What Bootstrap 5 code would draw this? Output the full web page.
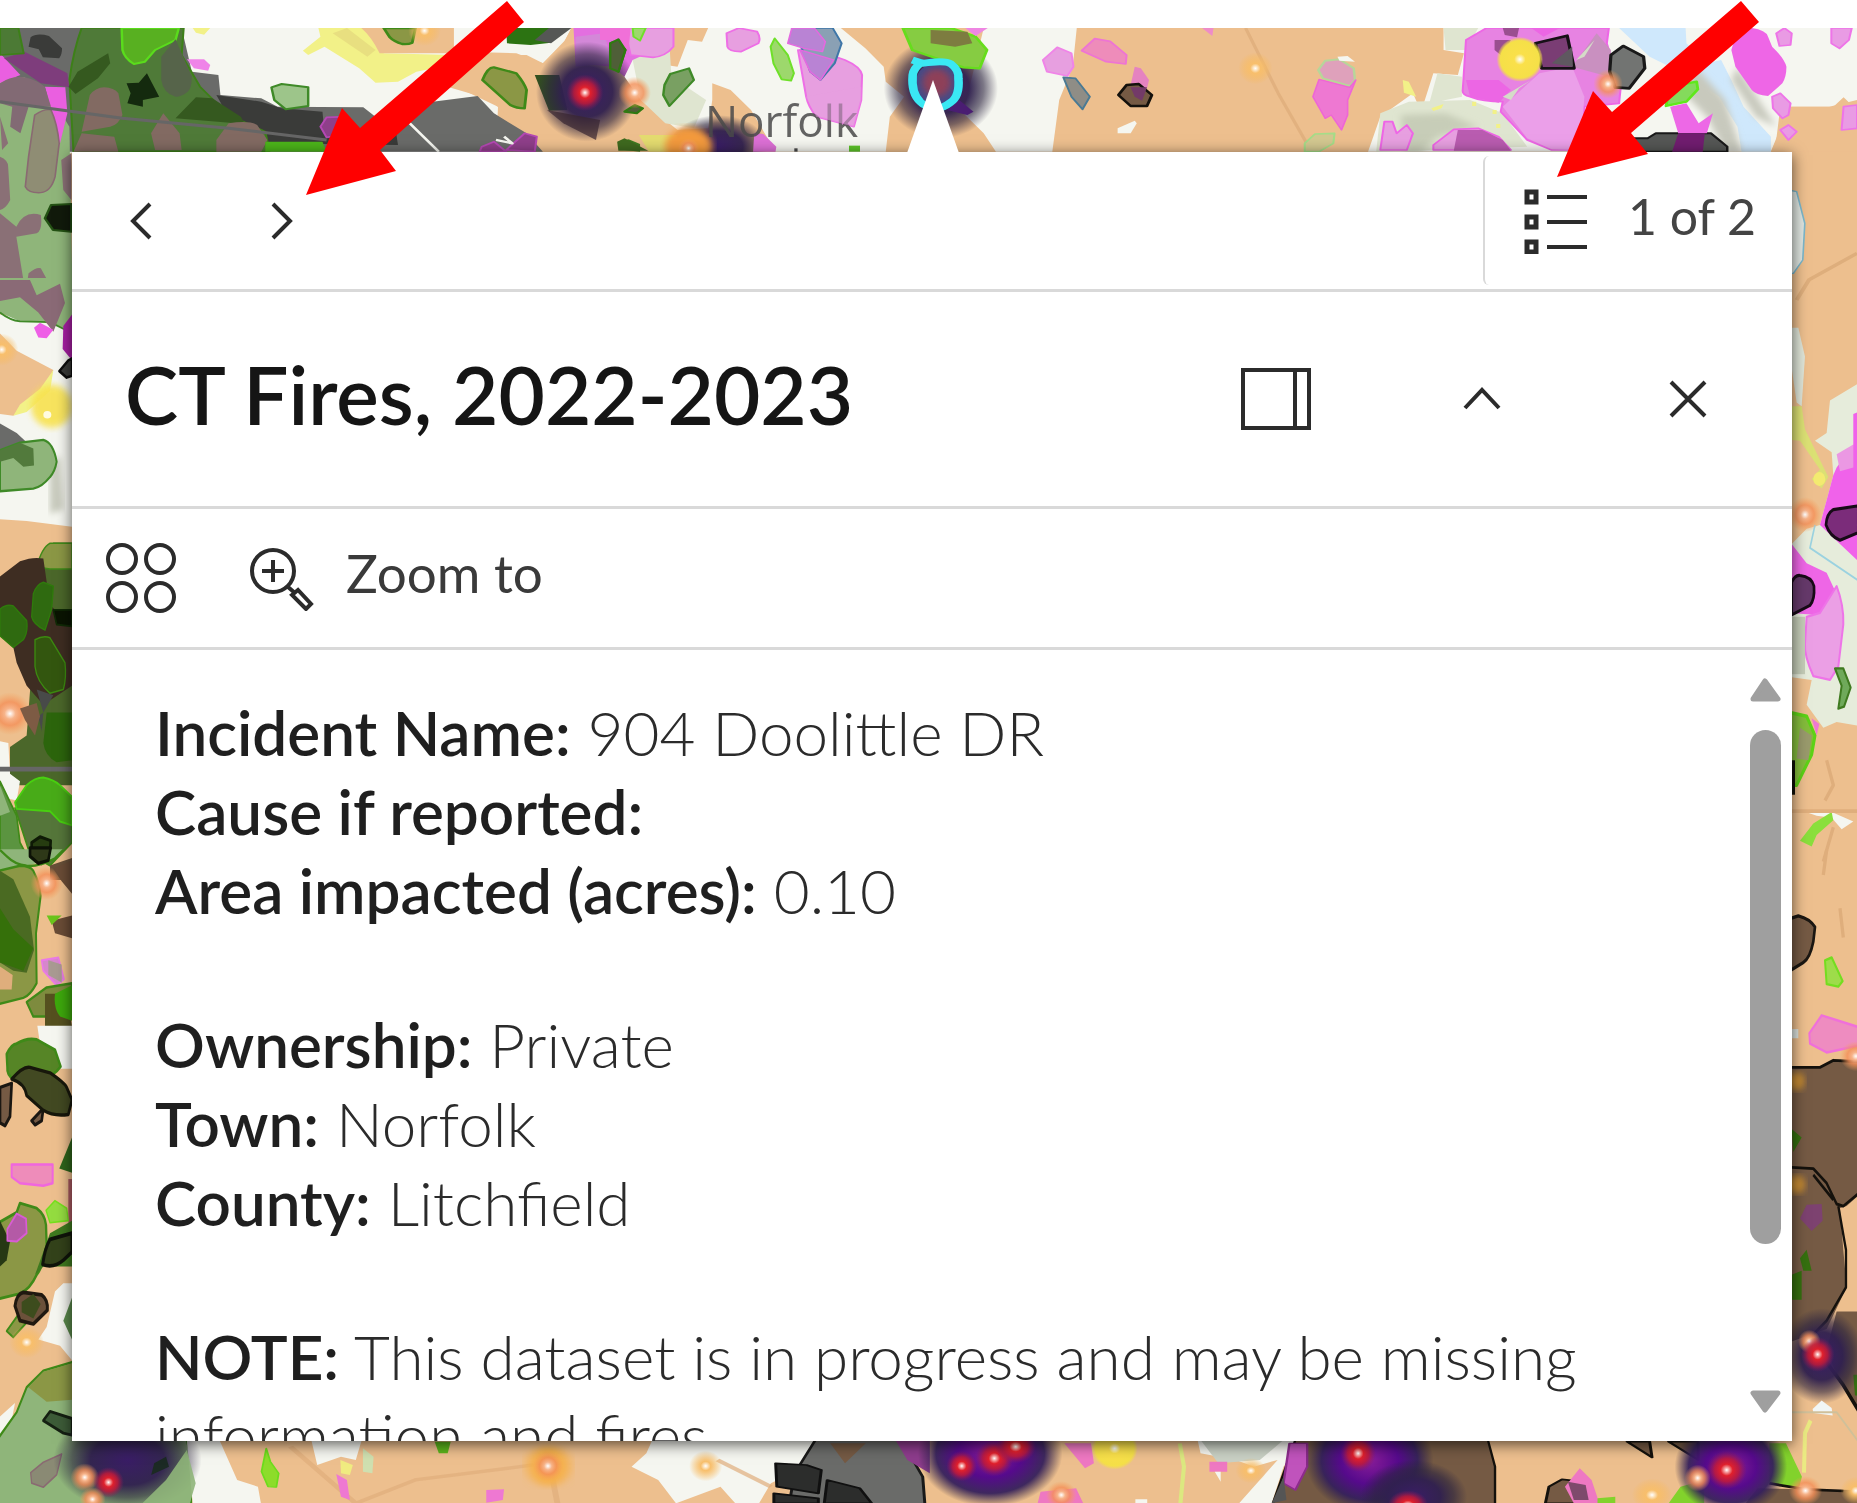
<!DOCTYPE html>
<html lang="en">
<head>
<meta charset="utf-8">
<meta name="viewport" content="width=device-width, initial-scale=1">
<title>CT Fires, 2022-2023</title>
<link href="https://cdn.jsdelivr.net/npm/bootstrap@5.3.0/dist/css/bootstrap.min.css" rel="stylesheet">
<style>
body { font-family: Lato, "Open Sans", sans-serif; color: #1f1f1f; background: #fff; }
.page { height: 100vh; min-height: 900px; padding-top: 28px; }
.map-stage { padding: 124px 65px 62px 72px; }
.map-art, .callouts { position: absolute; inset: 0; width: 100%; height: 100%; }
.map-art { stroke-linejoin: round; }
.callouts { pointer-events: none; z-index: 3; }
.popup { background: #fff; box-shadow: 0 3px 14px rgba(0,0,0,.65); z-index: 1; min-height: 0; }
.popup-pointer { position: absolute; left: 50%; top: -72px; margin-left: -25px; width: 52px; height: 73px; background: #fff; clip-path: polygon(50% 0, 100% 100%, 0 100%); }
.bar { border-bottom: 3px solid #d9d9d9; flex: none; }
.bar-nav { height: 140px; }
.bar-title { height: 217px; padding-left: 53px; }
.bar-actions { height: 141px; padding-left: 31px; gap: 68px; }
.plain { background: none; border: 0; padding: 0; color: #2b2b2b; display: flex; align-items: center; justify-content: center; border-radius: 0; }
.plain svg { fill: none; stroke: #2b2b2b; stroke-width: 3; display: block; }
.nav-step { width: 140px; height: 100%; }
.nav-step svg { stroke-width: 4; }
.nav-list { border-left: 2px solid #d9d9d9; border-radius: 6px; margin: 4px 0; padding: 0 36px 0 38px; gap: 41px; font-size: 50px; line-height: 60px; color: #444; }
.plain-label { padding-bottom: 10px; }
.title-text { font-size: 80px; line-height: 92px; font-weight: 600; color: #151515; margin: 0; padding-bottom: 10px; }
.title-btn { width: 206px; height: 100%; }
.title-tools { margin-right: 1px; }
.zoom-btn { gap: 31px; font-size: 53px; line-height: 60px; color: #3a3a3a; }
.popup-body { min-height: 0; overflow: hidden; }
.fields { padding: 43px 0 0 83px; font-size: 62px; line-height: 79px; font-weight: 300; color: #2b2b2b; overflow: hidden; }
.fields p { margin: 0 0 75px; }
.fields b { font-weight: 600; color: #1f1f1f; }
.scroller { width: 31px; margin-right: 11px; padding: 28px 0; flex: none; }
.scroller svg { fill: #9f9f9f; stroke: #9f9f9f; stroke-width: 5; stroke-linejoin: round; display: block; flex: none; }
.thumb { width: 31px; border-radius: 16px; background: #9f9f9f; margin-top: 28px; flex: 514 0 0; }
.thumb-rest { flex: 146 0 0; }
</style>
<script src="https://cdn.jsdelivr.net/npm/bootstrap@5.3.0/dist/js/bootstrap.bundle.min.js"></script>
</head>
<body>
<div class="page position-relative d-flex flex-column overflow-hidden">
<main class="map-stage position-relative flex-fill d-flex flex-column overflow-hidden">
<svg class="map-art" viewBox="0 28 1857 1475" preserveAspectRatio="xMidYMin slice" role="img" aria-label="Fire map">
<defs>
<radialGradient id="hot"><stop offset="0" stop-color="#fff"/><stop offset=".12" stop-color="#f5a0a0"/><stop offset=".3" stop-color="#e0202c"/><stop offset=".6" stop-color="#c01a3a" stop-opacity=".85"/><stop offset="1" stop-color="#8a1a60" stop-opacity="0"/></radialGradient>
<radialGradient id="warm"><stop offset="0" stop-color="#fff"/><stop offset=".25" stop-color="#f7b48a"/><stop offset=".55" stop-color="#f48f58" stop-opacity=".8"/><stop offset="1" stop-color="#f5a05c" stop-opacity="0"/></radialGradient>
<radialGradient id="amber"><stop offset="0" stop-color="#fff"/><stop offset=".3" stop-color="#f8bf6c"/><stop offset="1" stop-color="#f8b858" stop-opacity="0"/></radialGradient>
<radialGradient id="sun"><stop offset="0" stop-color="#fff"/><stop offset=".25" stop-color="#fae04a"/><stop offset=".85" stop-color="#f5e048"/><stop offset="1" stop-color="#f5e048" stop-opacity=".2"/></radialGradient>
<radialGradient id="night"><stop offset="0" stop-color="#3a1d66"/><stop offset=".5" stop-color="#30204f" stop-opacity=".96"/><stop offset=".75" stop-color="#2c2440" stop-opacity=".6"/><stop offset="1" stop-color="#2c2440" stop-opacity="0"/></radialGradient>
<radialGradient id="violet"><stop offset="0" stop-color="#8a1d98"/><stop offset=".45" stop-color="#560a8c"/><stop offset=".75" stop-color="#35205c" stop-opacity=".95"/><stop offset="1" stop-color="#2c2440" stop-opacity="0"/></radialGradient>
<filter id="soft"><feGaussianBlur stdDeviation="9"/></filter>
</defs>
<rect y="28" width="1857" height="1475" fill="#edbf8e"/>

<!-- north-west corner -->
<g transform="scale(.4082 .3333)">
<path fill="#f5f6f0" d="M440 84H1400L1380 130 1330 190 1290 165 1110 165 1100 250 1220 320 1215 460H0V84Z"/>
<path fill="#f2f188" d="M780 84H900L940 160 1110 165 1180 170 1080 200 1020 215 975 245 920 248 880 205 795 140 755 165 742 152 785 110ZM472 84H515L500 104 480 98Z"/>
<path fill="#edbf8e" d="M885 84H1112V160H930Q910 110 885 84ZM1140 155 1265 160 1330 190 1385 120 1400 84H1568V460H1325L1310 420 1210 310 1165 285 1100 262Z"/>
<path fill="#e8df80" d="M850 84 920 150 900 170 815 100Z"/>
<path fill="#6a6b69" d="M0 84H445L470 215 535 225 540 285 640 295 680 320 890 322 940 370 1000 360 1060 305 1170 288 1210 340 1290 400 1330 455H0Z"/>
<path fill="#3a3b39" d="M530 285 640 305 690 325 790 335 795 400 970 395 975 435 650 430 560 350Z"/>
<path fill="#8fb57a" d="M0 230 60 232 130 300 170 380 178 900H0Z"/>
<path fill="#4f7a38" stroke="#3d8018" stroke-width="5" d="M200 84H450L445 165 490 260 560 345 650 395 660 455H180L170 240Q180 150 200 84Z"/>
<path fill="#ea5fe0" d="M0 160 50 225 0 250ZM110 260 160 262 165 340 145 440 130 350Z"/>
<path fill="#7e3d7c" d="M60 155 165 220 170 262 100 250 10 175Z"/>
<path fill="#4c7a35" stroke="#3d8018" stroke-width="5" d="M0 84H45L58 160 0 165Z"/>
<path fill="#3a3b39" d="M75 112Q90 98 120 108L152 145Q152 165 145 175L105 172 95 148 70 140Z"/>
<path fill="#58b021" stroke="#5adc1c" stroke-width="6" d="M298 84H438L430 120 380 150 355 185 328 192Q305 175 300 150Z"/>
<path fill="#56644a" d="M395 170 430 118 470 230Q470 270 455 280 440 292 430 290 400 280 395 240Z"/>
<path fill="#35591f" d="M190 215 265 160 270 190 240 235 185 282 168 260ZM430 355 480 292 520 295 590 350 600 372Z"/>
<path fill="#142a0e" d="M310 250 340 248 360 220 372 248 390 290 350 300 350 320 312 310 320 280Z"/>
<path fill="#826a62" d="M220 285Q235 262 255 262 280 264 290 280L300 345Q290 375 270 380L200 395ZM370 400 400 340 440 400 445 450H380ZM200 400 280 410 290 455H180ZM530 420 560 370Q610 360 630 375L655 420 640 455H530Z"/>
<path fill="#826a74" d="M0 250Q30 225 60 232 90 240 110 260L125 320 70 320 50 400 25 380 30 320 0 310Z"/>
<path fill="#8f8d74" stroke="#8a6a72" stroke-width="4" d="M85 345Q110 325 125 330 140 370 145 430L135 530Q125 575 100 578 70 580 62 560L70 470Z"/>
<path fill="#8a7076" d="M0 470Q20 480 20 500L25 600Q15 625 0 630ZM0 640 40 680Q60 630 100 645 105 690 90 700L40 710 60 860 35 900H0ZM70 820Q90 800 100 805L120 850 145 850 150 900H60ZM150 480 175 460V600L155 570ZM0 350 20 430 5 450Z"/>
<path fill="#111a0b" stroke="#245214" stroke-width="6" d="M110 655 125 615 175 612V695L130 690Z"/>
<path fill="#4cb51a" d="M650 425 790 425 800 455H650Z"/>
<path fill="none" stroke="#666" stroke-width="9" d="M0 305 300 355 560 385 800 420"/>
<path fill="#ef84e8" d="M458 178 500 178 515 195 510 212 475 205Z"/>
<path fill="#9dc58a" stroke="#3f8a28" stroke-width="6" d="M665 262 690 252 755 262V318L700 328 672 300Z"/>
<path fill="#8f3f8a" stroke="#b548b4" stroke-width="5" d="M785 380 800 352 850 350 860 400 800 412ZM1180 440 1210 425 1240 455H1175ZM1240 450 1285 400 1315 410 1310 455Z"/>
<path fill="none" stroke="#f5f6f0" stroke-width="7" d="M1000 365 1075 455M1235 410 1255 430 1215 420"/>
<path fill="#8b9745" stroke="#3f8a18" stroke-width="7" d="M940 84H1018L1010 128Q1000 134 985 132 965 125 955 112ZM1182 240Q1195 200 1210 202L1265 220Q1285 250 1290 270L1285 325Q1265 325 1250 315Z"/>
<path fill="#2c7312" d="M1240 84H1350V128L1300 135 1242 130Z"/><path fill="#555755" d="M1345 84H1400L1350 130 1310 120Z"/>
<path fill="#e36fe0" d="M1405 84H1568V180L1540 240 1500 200 1410 190Z"/><path fill="#d388d8" d="M1410 110 1480 100 1500 190 1410 200Z"/>
<path fill="#33511f" d="M1310 225 1370 225 1390 330 1345 332Z"/>
<ellipse cx="1438" cy="275" rx="125" ry="150" fill="url(#night)"/><path fill="#372530" d="M1340 330 1470 360 1460 420 1380 370Z" opacity=".7"/>
<path fill="#475530" stroke="#2f7a12" stroke-width="6" d="M1495 130 1515 118 1532 150 1515 215 1495 200Z"/>
<ellipse cx="1433" cy="278" rx="45" ry="55" fill="url(#hot)"/>
<ellipse cx="1040" cy="92" rx="40" ry="46" fill="url(#amber)"/>
<path fill="#3f7a20" d="M1515 425 1540 418 1568 432V455L1530 450Z"/>
</g>

<!-- north centre -->
<g transform="translate(600 0) scale(.4082 .3333)">
<path fill="#f5f6f0" d="M265 84H590L650 145 695 200 700 245 745 290 710 350 700 455H430L370 330 320 270 275 250V300L265 385 190 390 100 300 60 230 80 180 190 200 215 120 250 125Z"/>
<path fill="#dfe5d0" d="M80 180 170 130 175 230 260 300 230 385 160 370 100 300Z"/>
<path fill="#f5f6f0" d="M940 84H1168L1158 200 1125 300 1108 455H970L940 400 890 340Z"/>
<path fill="#e79fe0" stroke="#ee6fe6" stroke-width="5" d="M60 84H180V140Q160 170 130 172L75 165ZM310 100 340 84 385 95Q395 115 388 130L345 155Q315 155 312 140ZM485 150 530 150 600 180Q638 200 642 225L640 300 622 380 530 350Q510 320 505 290Z"/>
<path fill="#f070d8" d="M0 84H75L70 150 30 120 0 120Z"/>
<path fill="#9dd86c" stroke="#6fe02a" stroke-width="5" d="M80 84H112L98 122 82 110ZM428 115 460 165 475 220 468 242 445 238 425 190 418 140Z"/>
<path fill="#8aa0b4" stroke="#3e76a8" stroke-width="5" d="M470 84H570L592 130 575 190 540 240 515 215 500 160Z"/>
<path fill="#b983d4" stroke="#e469e0" stroke-width="4" d="M470 84H525L552 125 545 155 500 145 460 130ZM490 150 572 180 540 240 515 215Z"/>
<path fill="#79a062" stroke="#3f8a28" stroke-width="6" d="M158 255 172 222 218 205 230 240 170 318 155 285Z"/>
<ellipse cx="290" cy="440" rx="120" ry="95" fill="url(#night)"/>
<path fill="#4f5f38" stroke="#2f7a12" stroke-width="6" d="M25 130 45 118 62 150 45 215 25 205ZM60 335 85 315 105 325 90 340Z"/>
<ellipse cx="85" cy="278" rx="40" ry="48" fill="url(#warm)"/>
<path fill="#e4dc70" d="M95 405H190V455H120Z"/><path fill="#3f6a1f" d="M42 425 60 415 118 452H45Z"/>
<ellipse cx="217" cy="440" rx="58" ry="58" fill="#f39a3c" filter="url(#soft)"/><ellipse cx="217" cy="445" rx="26" ry="30" fill="url(#warm)"/>
<path fill="#dd70d6" d="M378 400 400 402 432 440 430 455H375Z"/><path fill="#5dc52a" d="M610 437H637V455H610Z"/><path fill="#4a4a4a" d="M476 445H484V455H476Z"/>
<g fill="#4a4a4a" opacity=".85" transform="scale(2.45 3)"><text x="105" y="137" font-family="Open Sans, Noto Sans, sans-serif" font-size="44">Norfolk</text></g>
<path fill="#e79fe0" opacity=".55" d="M505 290 640 260 640 300 622 380 530 350Z"/>
<ellipse cx="835" cy="265" rx="140" ry="150" fill="url(#night)"/>
<path fill="#86cc42" stroke="#66dd1c" stroke-width="7" d="M742 84H860L920 110 948 150 930 205 890 202 800 165 765 150Z"/><path fill="#7d7c40" d="M810 90 900 95 912 130 870 140 810 130Z"/>
<path fill="#ee86e2" d="M895 84H950L920 108Z"/>
<ellipse cx="825" cy="250" rx="52" ry="62" fill="#454a86"/><ellipse cx="825" cy="248" rx="35" ry="42" fill="#8e4058" filter="url(#soft)"/>
<path fill="#4a1d72" d="M880 300 915 335 900 345 850 330Z"/>
<path fill="none" stroke="#3ae8f4" stroke-width="21" d="M765 180 790 190Q845 180 860 192 880 210 878 235 882 290 858 308 840 325 825 325 795 320 785 306 762 280 766 225 768 205 785 190"/>
<path fill="#e79fe0" stroke="#f084e8" stroke-width="5" d="M1085 180 1120 142 1155 160 1160 200 1145 228 1095 215Z"/>
<path fill="#ee8cba" stroke="#ee74d4" stroke-width="5" d="M1180 152 1212 116 1250 124 1290 165 1288 192 1240 185Z"/>
<path fill="#8f8d86" stroke="#4a7a94" stroke-width="5" d="M1135 232 1165 235 1200 290 1182 328 1155 290Z"/>
<path fill="#e583c0" d="M1310 200 1325 205 1345 240 1340 265 1300 255Z"/>
<path fill="#755a44" stroke="#14110c" stroke-width="7" d="M1270 285 1290 255 1320 252 1352 285 1340 318 1300 318Z"/><path fill="#733a68" d="M1300 262 1340 262 1328 302 1310 290Z"/>
<path fill="#f5f6f0" d="M1268 385 1310 362 1315 370 1300 400H1268Z"/><path fill="#ee8cc8" d="M1475 84H1503L1500 108Z"/>
</g>

<!-- north east -->
<g transform="translate(1217 0) scale(.4082 .3333)">
<path fill="none" stroke="#dfae7c" stroke-width="8" d="M70 84 150 280 220 430" opacity=".8"/>
<path fill="#f5f6f0" d="M555 84H1568V300L1500 320H1380L1370 420 1357 455H370L400 350 480 280 500 335 530 220 590 225 605 160 555 150Z"/>
<path fill="#dfe5d0" d="M555 84 640 84 610 150 560 150ZM400 340 470 305 620 300 700 340 760 440 390 455ZM520 310 540 220 600 230 600 290Z"/>
<path fill="#c7cdb8" d="M450 345 560 340 640 380 540 410 500 455H460Z" filter="url(#soft)"/>
<path fill="#edbf8e" d="M1400 320 1510 320 1535 292 1568 330V455H1357L1375 400Z"/>
<path fill="#cfe8fc" d="M985 84H1148L1150 130 1200 190 1235 180 1260 240 1290 320 1357 410V455H1285L1275 380 1230 290 1150 225 1060 170Z"/>
<path fill="#c8c9bd" d="M1180 210 1245 300 1285 455H1245L1200 350 1120 250ZM1275 200 1370 380 1320 350 1260 240Z" filter="url(#soft)"/>
<path fill="#e783e2" stroke="#ee66e6" stroke-width="5" d="M610 120 660 84H960L955 130 970 190 990 250 985 310 900 320 895 450 820 450 760 420 695 335 700 305Q650 305 620 290 600 285 602 270Z"/>
<path fill="#eb9fe9" d="M700 320 790 220 870 200 900 290 890 450 820 448 760 415Z"/>
<path fill="#ec66e4" d="M610 240 690 240 720 270 690 308 620 290ZM770 84H840L800 110Z"/><path fill="#c990c0" d="M870 200 930 100 965 150 960 230Z"/>
<path fill="#d5dcc8" d="M700 290 770 240 740 265 720 300ZM880 180 925 120 900 170Z"/>
<path fill="#9a4f90" d="M700 84H740L735 112 705 105ZM680 120 720 120 700 170 680 150Z"/>
<path fill="#7a3d74" stroke="#161016" stroke-width="8" d="M780 130 858 107 875 205H795Z"/><path fill="#5f5860" d="M820 190 870 140 872 200Z"/>
<ellipse cx="742" cy="178" rx="56" ry="66" fill="url(#sun)"/>
<path fill="#727472" stroke="#191919" stroke-width="8" d="M965 165 995 138 1045 170 1048 205 1010 265 975 262 962 215Z"/>
<ellipse cx="958" cy="252" rx="36" ry="44" fill="url(#warm)"/>
<path fill="#84da5c" stroke="#5fe81c" stroke-width="7" d="M1175 245 1178 268 1150 305 1100 318 1110 260Z"/>
<path fill="#555755" stroke="#191919" stroke-width="6" d="M1000 415H1055L1075 400H1210L1250 440V455H1030Z"/>
<path fill="#ed68e6" d="M1110 320 1150 310 1180 370 1215 340 1200 400H1130Z"/><path fill="#711d70" d="M1130 400H1195L1190 455H1115Z"/>
<path fill="#ee66e6" d="M1260 150 1270 110Q1285 84 1310 84 1345 90 1350 110L1360 140Q1390 175 1395 200 1395 230 1385 250L1350 288Q1320 285 1310 270L1270 200Z"/>
<path fill="#e99be4" stroke="#ee74e8" stroke-width="5" d="M1370 100 1390 84 1408 100 1405 135 1378 138ZM1505 84H1555L1548 120 1525 145 1505 130ZM1360 290 1380 280 1405 310 1400 345 1385 355 1362 325ZM1535 320 1568 315V385L1530 390ZM1380 390 1400 375 1420 395 1400 420Z"/>
<path fill="#dfa1bb" stroke="#b7d69a" stroke-width="6" d="M248 210 265 182 300 178 335 205 338 240 325 258 260 235Z"/><path fill="#f5f6f0" d="M295 170 320 168 338 185 300 182Z"/>
<path fill="#ee78d2" stroke="#ee66d6" stroke-width="4" d="M235 290 250 238 325 262 340 240 320 300V345L305 390 280 345 265 355Z"/>
<path fill="#d3c890" stroke="#a5dd88" stroke-width="5" d="M215 430 240 402 288 400 285 430 250 455H215Z"/>
<path fill="#e79fe0" stroke="#ee66e6" stroke-width="5" d="M410 365 430 365 440 400 465 375 480 400 465 450H400ZM530 435 580 388 640 385 690 410 720 450H530Z"/><path fill="#b95cb0" d="M590 390 650 390 700 420 720 452H580Z"/>
<path fill="#f2f188" d="M455 240 470 245 488 290 458 278ZM525 325 555 312 550 325 530 333ZM625 305H635V318H625ZM675 330H685V342H675ZM684 372H694V384H684Z"/>
<ellipse cx="94" cy="205" rx="42" ry="48" fill="url(#amber)"/>
<path fill="#dfe5e0" stroke="#7cb8cc" stroke-width="4" d="M1400 570 1420 575 1440 670 1435 780 1412 820H1400Z"/>
<path fill="none" stroke="#deae7c" stroke-width="10" d="M1568 760 1450 840 1420 900"/>
</g>

<!-- west edge, upper -->
<g transform="translate(0 280) scale(.3333 .3827)">
<path fill="#f5f6f0" d="M0 90 80 100 216 130V645L80 630 0 625Z"/><path fill="#c8cabd" d="M150 480 180 460 190 600 150 610Z" filter="url(#soft)"/>
<path fill="#8fb57a" d="M0 -5H220V135L150 110 60 108 0 85Z"/><path fill="none" stroke="#3f8a28" stroke-width="5" d="M0 85Q30 105 60 108L150 110 220 140"/>
<path fill="#8a6a76" d="M0 0H90L110 40 180 10 195 60 160 135 115 85 60 45 0 55Z"/>
<path fill="#ee5fe6" d="M102 125 120 112 160 130 140 152 115 150Z"/><path fill="#a81fa4" d="M190 120 216 90V210L188 180Z"/>
<path fill="#3a3b39" stroke="#0d0d0d" stroke-width="7" d="M178 238 205 210 216 205V250L200 255Z"/>
<path fill="#edbf8e" d="M0 140 50 185 160 235 130 290 40 355 0 350Z"/><path fill="#f2f188" d="M160 235 150 290 80 345 40 355 60 325 120 285Z"/>
<ellipse cx="5" cy="182" rx="50" ry="42" fill="url(#amber)"/><ellipse cx="155" cy="330" rx="62" ry="56" fill="#f8e250" opacity=".9" filter="url(#soft)"/><ellipse cx="142" cy="352" rx="12" ry="10" fill="#fffbe0"/>
<path fill="#6a6b69" d="M0 375 50 400 100 440 0 450Z"/>
<path fill="#8fb57a" stroke="#3f8a28" stroke-width="6" d="M0 445 60 425 130 418Q160 425 170 475 165 500 150 515 125 542 100 545L0 552Z"/><path fill="#527a3c" d="M0 445 60 425 100 440 102 485 70 488 40 465 0 475Z"/>
<path fill="#4b672a" d="M120 730 160 686H216V1320H30V1220L80 1190Z"/><path fill="#8b9745" stroke="#3f8a18" stroke-width="4" d="M110 750Q125 700 150 688H216V755H150Z"/>
<path fill="#3e2d22" d="M0 775 60 735Q100 722 130 728L150 850 216 900V1060L130 1110 80 1060 50 1000 30 920 0 870Z"/>
<path fill="#2f6a10" stroke="#2f7a0c" stroke-width="4" d="M100 820Q110 795 130 790L160 800 155 860 135 915Q100 900 95 880ZM0 860Q20 845 40 852L80 890Q85 920 70 940L40 960 0 930Z"/>
<path fill="#33560f" stroke="#3c8a10" stroke-width="4" d="M105 940Q130 928 150 935L195 1000Q200 1040 190 1070L150 1080Q110 1050 105 1010Z"/><path fill="#0a1402" stroke="#102a06" stroke-width="5" d="M160 862H216V905L170 900Z"/>
<path fill="#2c650c" d="M140 1130H216V1255L170 1260Q135 1245 130 1210Z"/><path fill="#484a49" d="M110 1070 160 1085 130 1130ZM115 1140 130 1130 125 1180Z"/>
<ellipse cx="30" cy="1133" rx="66" ry="56" fill="url(#warm)"/><path fill="#7d5b44" d="M60 1120 110 1105 120 1140 105 1190 75 1150Z"/>
<path fill="#f5f6f0" d="M0 1205 25 1210 30 1290 60 1310 50 1360 0 1350Z"/><path fill="none" stroke="#666" stroke-width="12" d="M0 1278H216"/>
<path fill="#5b9440" stroke="#3f8a18" stroke-width="5" d="M0 1310 50 1400 60 1470 90 1520 60 1568H0Z"/><path fill="#8fb57a" d="M0 1320 30 1390 0 1400ZM0 1490 70 1520 90 1568H0Z"/>
<path fill="#55763a" stroke="#3f8a18" stroke-width="5" d="M45 1380H216V1470L150 1530 90 1500Z"/>
<path fill="#48ab18" stroke="#48d010" stroke-width="5" d="M45 1365 80 1320Q105 1300 130 1300 160 1305 180 1320L216 1350V1425L180 1415 150 1388 50 1382Z"/>
<path fill="#263c10" stroke="#0f1a06" stroke-width="8" d="M95 1470 120 1455 152 1465 150 1500 125 1525 95 1510Z"/>
<path fill="#674f38" d="M150 1530 216 1510V1568H150Z"/>
</g>

<!-- west edge, lower -->
<g transform="translate(0 850) scale(.3333 .4165)">
<path fill="#8fb57a" d="M-5 -2H190L165 20 80 38 20 15-5 50Z"/><path fill="none" stroke="#3f8a18" stroke-width="6" d="M190 0 165 20Q120 40 80 38 45 35 20 15L0 0"/>
<path fill="#2e3818" stroke="#0d1206" stroke-width="8" d="M90 -5H152L145 25 115 32 90 15Z"/>
<path fill="#8b9745" stroke="#3f8a18" stroke-width="6" d="M-5 50 60 38Q90 38 100 50 120 80 122 110L108 200 110 320Q90 350 70 355L-5 370Z"/>
<path fill="#4a6a22" d="M0 50 40 70 90 160 102 240 80 295 40 290 0 270Z"/><path fill="#35700a" d="M0 140 40 190 100 235 70 290 0 270Z"/><path fill="#dfae7c" d="M0 280 38 300 35 335 0 335Z"/>
<ellipse cx="140" cy="80" rx="48" ry="40" fill="url(#warm)"/>
<path fill="#6a4c36" d="M160 45 216 25V105L185 75ZM155 170 216 157V212L165 200Z"/><path fill="#6bc41c" d="M140 157H185L155 180Z"/>
<path fill="#d687cc" stroke="#ea7ae6" stroke-width="5" d="M125 265 175 258 192 310 170 325 130 290Z"/><path fill="#a99a92" d="M145 265 185 275 185 318 145 300Z"/>
<path fill="#7e8b3e" stroke="#3f8a18" stroke-width="6" d="M80 365 140 330 216 320V400H100Z"/><path fill="#55501f" d="M135 345H200L216 425H135Z"/><path fill="#3da80c" d="M165 345 216 325V410L180 400Q160 380 165 345Z"/>
<path fill="#f5f6f0" d="M112 422H216V525H180L160 480 118 455Z"/>
<path fill="#568526" stroke="#3f8a18" stroke-width="7" d="M20 490Q35 465 50 465 80 450 110 455L165 480 182 520Q160 545 130 545L40 550Q20 540 22 520Z"/>
<path fill="#755a44" stroke="#1b1712" stroke-width="8" d="M0 570 35 560 30 640 15 662 0 655ZM95 650 130 620 125 650 105 660Z"/>
<path fill="#424922" stroke="#17170b" stroke-width="8" d="M35 550Q70 518 90 522L150 535Q195 560 200 570L216 600 205 635Q160 640 130 625L80 590Q75 560 35 550Z"/>
<path fill="#2f651b" d="M178 765 216 690V775Z"/><path fill="#ee8cba" stroke="#f066de" stroke-width="6" d="M35 755H158V800L130 806 60 800 35 785Z"/><path fill="#ad5b62" d="M205 790H216V900H205Z"/>
<path fill="#8b9745" stroke="#3f8a18" stroke-width="7" d="M-5 895 50 870 60 848 110 860Q135 875 138 900L140 950Q130 1000 110 1020 90 1055 60 1065L-5 1078Z"/>
<path fill="#263814" d="M0 890 30 940 20 985 0 1000Z"/><path fill="#b45aa6" stroke="#d85cd4" stroke-width="5" d="M22 910 50 873 78 885 80 920 50 940 22 938Z"/>
<path fill="#94dc40" stroke="#74e01c" stroke-width="4" d="M138 865 165 842 200 860 205 890 150 895Z"/><path fill="#3f7a1f" d="M105 1020 150 920 216 890V1000L130 1000Z"/>
<path fill="#33421a" stroke="#10140a" stroke-width="9" d="M128 995Q135 955 150 935L216 920V965L190 985Q160 1005 128 995Z"/>
<path fill="#8b9745" stroke="#3f8a18" stroke-width="5" d="M20 1155 60 1110 85 1130 40 1170Z"/><path fill="#6b513a" stroke="#201910" stroke-width="9" d="M45 1095Q50 1065 70 1062L125 1068Q145 1080 142 1105L100 1138 60 1130Z"/><path fill="#3d4c1d" d="M65 1085 100 1066 122 1090 100 1125 65 1110Z"/>
<path fill="#f5f6f0" d="M165 1060 190 1040H216V1225L180 1190 115 1175 140 1145Z"/><path fill="#5b8a4c" d="M190 1130 216 1075V1175Z"/>
<ellipse cx="80" cy="1182" rx="52" ry="38" fill="url(#amber)"/>
<path fill="#f5f6f0" d="M0 1360 45 1328 30 1390 0 1420Z"/>
<path fill="#8fb57a" stroke="#3f8a18" stroke-width="6" d="M-5 1412 50 1350 80 1290 130 1250 216 1230H500L590 1510 570 1580H-5Z"/><path fill="#8b9745" d="M85 1290 130 1253 216 1232V1320L140 1325Z"/>
<path fill="#3d5c38" stroke="#152012" stroke-width="7" d="M130 1370 150 1348 216 1365V1405L190 1400Z"/>
<path fill="#8a8a74" stroke="#8a6a72" stroke-width="4" d="M92 1495 130 1470 185 1450 170 1500 130 1530 95 1520Z"/>
</g>

<!-- south west -->
<g transform="translate(0 1400) scale(.593 .3333)">
<path fill="#edbf8e" d="M315 100H1400V320H325Z"/>
<path fill="#f5f6f0" d="M315 120H370L400 240 435 260 440 310H325ZM525 120H610L600 180 575 170 535 195ZM1100 120H1400L1380 180 1300 250 1280 310H1240L1215 260 1140 310 1110 240 1065 200 1090 160Z"/>
<path fill="none" stroke="#dfae7c" stroke-width="10" d="M490 140 600 310 700 240 900 195M930 220 940 310M1210 180 1300 260" opacity=".7"/>
<ellipse cx="215" cy="180" rx="125" ry="150" fill="url(#night)"/>
<path fill="#8fb57a" opacity=".9" d="M315 150 330 250 320 310H240L280 240Z"/><path fill="#1c2a24" d="M260 190 280 170 285 200 255 225Z"/>
<ellipse cx="143" cy="232" rx="24" ry="42" fill="url(#warm)"/><ellipse cx="183" cy="247" rx="26" ry="46" fill="url(#hot)"/><ellipse cx="156" cy="298" rx="22" ry="36" fill="url(#warm)"/>
<path fill="#8ddc2a" stroke="#6cdc1c" stroke-width="3" d="M449 145 456 185 470 220 466 262 452 260 441 215Z"/><path fill="#5cb51c" d="M733 125H760L755 160 740 160Z"/><path fill="#cfe0b0" d="M612 145 630 170 628 220 612 215Z"/>
<path fill="#f0ec80" d="M574 180 595 195 590 225 575 220Z"/><path fill="#ee78d2" d="M567 222 585 240 590 300 575 290ZM820 270 850 268 848 300 820 308Z"/>
<ellipse cx="925" cy="198" rx="36" ry="60" fill="#f6b048" filter="url(#soft)"/><ellipse cx="924" cy="198" rx="26" ry="46" fill="url(#warm)"/><ellipse cx="1190" cy="198" rx="28" ry="46" fill="url(#amber)"/>
<path fill="#6a6b69" stroke="#191919" stroke-width="5" d="M1375 120H1520L1556 230 1560 320H1330L1340 220Z"/><path fill="#755a44" d="M1400 130 1460 130 1425 190Z"/>
<path fill="#2c2d2c" stroke="#101010" stroke-width="5" d="M1308 190 1360 195 1385 210 1380 280 1310 260ZM1395 240 1450 265 1470 310H1390ZM1305 280 1380 295 1380 310H1305Z"/>
<path fill="#8d3c8c" d="M1510 120H1568V220L1530 180Z"/>
</g>

<!-- south east -->
<g transform="translate(928 1400) scale(.5925 .3333)">
<path fill="#f5f6f0" d="M455 120H630L600 200 580 310H525L560 240 590 180 550 200 520 180 460 160Z"/><path fill="#c9d0c4" d="M460 120H600L560 180 490 190Z"/>
<path fill="#755a44" stroke="#14110c" stroke-width="4" d="M620 120H945L957 200V320H580Z"/>
<path fill="#c053bc" stroke="#8d2c8c" stroke-width="4" d="M610 130H640V200L620 270 600 250Z"/><path fill="#555" d="M580 310 600 230 605 300Z"/>
<ellipse cx="105" cy="160" rx="122" ry="160" fill="url(#violet)"/><ellipse cx="745" cy="180" rx="108" ry="160" fill="url(#violet)"/><ellipse cx="820" cy="290" rx="90" ry="110" fill="url(#night)"/>
<ellipse cx="57" cy="198" rx="26" ry="46" fill="url(#hot)"/><ellipse cx="112" cy="175" rx="32" ry="54" fill="url(#hot)"/><ellipse cx="148" cy="140" rx="34" ry="50" fill="url(#hot)"/><ellipse cx="726" cy="160" rx="30" ry="56" fill="url(#hot)"/><ellipse cx="810" cy="315" rx="34" ry="44" fill="url(#hot)"/>
<path fill="#ee78c2" d="M230 130 275 130 280 190 265 205ZM190 275 250 265 262 310H185ZM475 185H505V215H475Z"/><path fill="#f5f6f0" d="M484 215H494V245ZM350 298H370V310H350Z"/>
<ellipse cx="315" cy="145" rx="38" ry="62" fill="url(#sun)"/><ellipse cx="225" cy="285" rx="26" ry="42" fill="url(#warm)"/><ellipse cx="545" cy="212" rx="26" ry="38" fill="url(#amber)"/>
<path fill="none" stroke="#dce880" stroke-width="7" d="M425 130 432 200 426 310"/>
<path fill="#755a44" stroke="#14110c" stroke-width="5" d="M1180 125H1218L1222 172ZM1250 125H1300V180ZM1042 310 1048 260 1070 238 1105 245 1115 310Z"/><path fill="#ee78c2" d="M1100 205 1120 240 1133 310H1090L1075 260Z"/><path fill="#7e4a6c" d="M1080 245 1110 255 1115 300 1090 300Z"/>
<path fill="#82d22c" d="M1250 310 1270 260 1310 240V310ZM1130 295 1160 290V310H1130ZM1420 130H1448L1475 230 1470 265 1420 250Z"/><path fill="#755a44" d="M1400 265 1568 270V310H1380Z"/>
<path fill="none" stroke="#14110c" stroke-width="8" d="M1420 250 1480 268 1545 273"/>
<ellipse cx="1355" cy="200" rx="95" ry="145" fill="url(#violet)"/><ellipse cx="1348" cy="210" rx="34" ry="58" fill="url(#hot)"/><ellipse cx="1299" cy="234" rx="22" ry="40" fill="url(#warm)"/>
<ellipse cx="1222" cy="285" rx="34" ry="50" fill="url(#amber)"/><ellipse cx="1481" cy="272" rx="28" ry="44" fill="url(#warm)"/><ellipse cx="1566" cy="272" rx="26" ry="42" fill="url(#amber)"/>
</g>

<!-- east edge, upper -->
<g transform="translate(1640 280) scale(.3333 .3827)">
<path fill="#dfe5d8" d="M455 125H475L495 200 485 330 470 320 455 230Z"/><path fill="#dbe074" d="M455 330H485L495 390 565 515 545 545 515 520 540 495 480 420 455 418Z"/>
<path fill="#e6ecdb" d="M570 315 655 270V1165L590 1155 550 1170 500 1110 515 1045 455 1038V690L500 650 540 640 580 510 575 450 525 420 560 400Z"/>
<path fill="#edbf8e" d="M500 640 545 600 565 520 555 560 530 640Z"/>
<path fill="#f062ea" d="M640 350 655 345V735L600 690 540 640 580 510 590 490 640 430Z"/><path fill="#eb98e3" d="M590 455 640 430V490L600 500Z"/>
<path fill="#7b2c7a" stroke="#170a17" stroke-width="8" d="M558 640Q560 610 580 600L655 590V660L600 680Q570 670 558 640Z"/>
<path fill="none" stroke="#9bd2e0" stroke-width="5" d="M525 640 510 700 655 785"/>
<path fill="#ee66e6" d="M455 690 500 740 560 765 595 830 590 880 455 870Z"/><path fill="#eb9fe5" stroke="#ee74e8" stroke-width="6" d="M500 880 540 870 590 800Q612 850 610 900L595 1010 570 1045 520 1035Q492 980 495 950Z"/>
<path fill="#c5cdb8" d="M455 880 495 880 495 1030H455Z"/><path fill="#65396a" stroke="#170a17" stroke-width="8" d="M455 790Q465 770 480 772 515 775 522 800 525 835 510 850L455 875Z"/>
<path fill="#6fa95a" stroke="#3f7a20" stroke-width="6" d="M585 1015 610 1015 632 1065 612 1115 595 1120 605 1060Z"/>
<path fill="#84bc3c" stroke="#5dd216" stroke-width="9" d="M450 1130 500 1140 525 1190 515 1240 470 1320H450Z"/><path fill="#999a6c" d="M480 1170 515 1190 505 1255 470 1250Z"/><path fill="#ee78d2" d="M515 1145 538 1160 530 1190Z"/><path fill="#101008" d="M455 1255H465V1345H455Z"/>
<path fill="#f5f6f0" d="M498 1390 575 1390 640 1415 605 1435 575 1405 530 1400Z"/><path fill="#8adf3c" d="M575 1390 580 1412 530 1450 515 1480 480 1465 520 1420Z"/>
<path fill="none" stroke="#dfae7c" stroke-width="10" d="M560 1255 580 1320 555 1360M455 1388H655M580 1430 550 1520"/>
<ellipse cx="495" cy="613" rx="50" ry="46" fill="url(#warm)"/><circle cx="538" cy="520" r="18" fill="#f3ea70"/>
</g>

<!-- east edge, lower -->
<g transform="translate(1640 850) scale(.3333 .4165)">
<path fill="none" stroke="#dfae7c" stroke-width="10" d="M560 0 550 60M600 140 610 210"/>
<path fill="#755a44" stroke="#1b1712" stroke-width="8" d="M450 165 475 158Q510 165 525 185L520 220Q510 260 490 270L450 290Z"/>
<path fill="#9edc4a" stroke="#74dd20" stroke-width="6" d="M555 265 575 258 608 315 595 328 560 322Z"/><path fill="#ee8cc0" stroke="#f070da" stroke-width="6" d="M508 440 545 397 655 425V470L560 486 510 465Z"/>
<path fill="#dfe5e0" d="M455 430H475V452H455Z"/>
<path fill="#755a44" d="M455 522 540 520 580 505 655 508V830L620 855 600 860 610 960 620 1050 560 1150 455 1180Z"/>
<path fill="none" stroke="#14110c" stroke-width="7" d="M455 522H540L580 505 655 508M655 825 610 855 590 850 560 800 520 765 455 762M520 780 580 840M595 855 618 960 618 1050 560 1130 500 1180"/>
<path fill="#755a44" d="M590 1108H655V1340L600 1280 560 1200Z"/><path fill="none" stroke="#14110c" stroke-width="10" d="M560 1230 610 1285 655 1345"/>
<path fill="#7d4270" d="M480 885 500 852 545 850 548 890 515 915Z"/><path fill="#35700f" d="M480 980 500 960 515 1010H490ZM455 1020 485 1010V1080H455ZM455 670 485 690 460 725ZM640 1260H655V1310H645Z"/>
<ellipse cx="470" cy="555" rx="24" ry="22" fill="#c58a30" filter="url(#soft)"/><ellipse cx="470" cy="803" rx="26" ry="22" fill="#c58a30" filter="url(#soft)"/>
<ellipse cx="545" cy="1215" rx="125" ry="115" fill="url(#night)"/><ellipse cx="508" cy="1180" rx="34" ry="28" fill="url(#warm)"/><ellipse cx="533" cy="1211" rx="50" ry="42" fill="url(#hot)"/>
<ellipse cx="648" cy="495" rx="48" ry="36" fill="url(#warm)"/>
<path fill="#f1f6f6" d="M518 1342 545 1322 575 1340 578 1358 520 1352Z"/><path fill="none" stroke="#cfc09a" stroke-width="5" d="M455 1350H590L655 1420"/><path fill="none" stroke="#eaea82" stroke-width="12" d="M512 1370 495 1400 492 1495"/>
</g>
</svg>

<section class="popup position-relative flex-fill d-flex flex-column" aria-label="Map popup">
<div class="popup-pointer"></div>
<div class="bar bar-nav d-flex">
<button type="button" class="plain nav-step" aria-label="Previous feature"><svg width="24" height="40" viewBox="0 0 24 40"><path d="M20 3 3 20 20 37"/></svg></button>
<button type="button" class="plain nav-step" aria-label="Next feature"><svg width="24" height="40" viewBox="0 0 24 40"><path d="M3 3 20 20 3 37"/></svg></button>
<button type="button" class="plain nav-list ms-auto"><svg width="64" height="66" viewBox="0 0 64 66"><path stroke-width="5" d="M4 4H13V14H4ZM4 29H13V39H4ZM4 54H13V64H4Z"/><path stroke-width="4" d="M24 9H64M24 34H64M24 59H64"/></svg><span class="plain-label">1 of 2</span></button>
</div>
<div class="bar bar-title d-flex align-items-center">
<h1 class="title-text">CT Fires, 2022-2023</h1>
<div class="title-tools ms-auto d-flex h-100">
<button type="button" class="plain title-btn" aria-label="Dock"><svg width="70" height="62" viewBox="0 0 70 62"><path stroke-width="4" d="M2 2H68V60H2ZM54 2V60"/></svg></button>
<button type="button" class="plain title-btn" aria-label="Collapse"><svg width="40" height="26" viewBox="0 0 40 26"><path stroke-width="4" d="M3 22 20 4 37 22"/></svg></button>
<button type="button" class="plain title-btn" aria-label="Close"><svg width="40" height="40" viewBox="0 0 40 40"><path stroke-width="4" d="M3 3 37 37M37 3 3 37"/></svg></button>
</div>
</div>
<div class="bar bar-actions d-flex align-items-center">
<button type="button" class="plain" aria-label="Actions"><svg width="74" height="72" viewBox="0 0 74 72"><g stroke-width="4"><circle cx="19" cy="17" r="14"/><circle cx="57" cy="17" r="14"/><circle cx="19" cy="55" r="14"/><circle cx="57" cy="55" r="14"/></g></svg></button>
<button type="button" class="plain zoom-btn"><svg width="70" height="66" viewBox="0 0 70 66"><g stroke-width="4"><circle cx="28" cy="26" r="21"/><path d="M28 15V37M17 26H39M43 42 50 48"/><path d="M47 50 53 45 66 59 61 64Z"/></g></svg><span class="plain-label">Zoom to</span></button>
</div>
<div class="popup-body flex-fill d-flex">
<div class="fields flex-fill">
<p><b>Incident Name:</b> 904 Doolittle DR<br><b>Cause if reported:</b><br><b>Area impacted (acres):</b> 0.10</p>
<p><b>Ownership:</b> Private<br><b>Town:</b> Norfolk<br><b>County:</b> Litchfield</p>
<p><b>NOTE:</b> This dataset is in progress and may be missing information and fires</p>
</div>
<div class="scroller d-flex flex-column" aria-hidden="true">
<svg width="31" height="24" viewBox="0 0 31 24"><path d="M15 3 28 21H3Z"/></svg>
<div class="thumb"></div><div class="thumb-rest"></div>
<svg width="31" height="23" viewBox="0 0 31 23"><path d="M3 3H28L15 20Z"/></svg>
</div>
</div>
</section>
</main>
<svg class="callouts" viewBox="0 0 1857 1503" preserveAspectRatio="xMidYMin slice" aria-hidden="true"><path fill="red" d="M507 1 524 22 380 150 396 171 306 195 342 108 360 128ZM1741 1 1759 22 1631 133 1648 154 1557 177 1593 91 1612 112Z"/></svg>
</div>
</body>
</html>
